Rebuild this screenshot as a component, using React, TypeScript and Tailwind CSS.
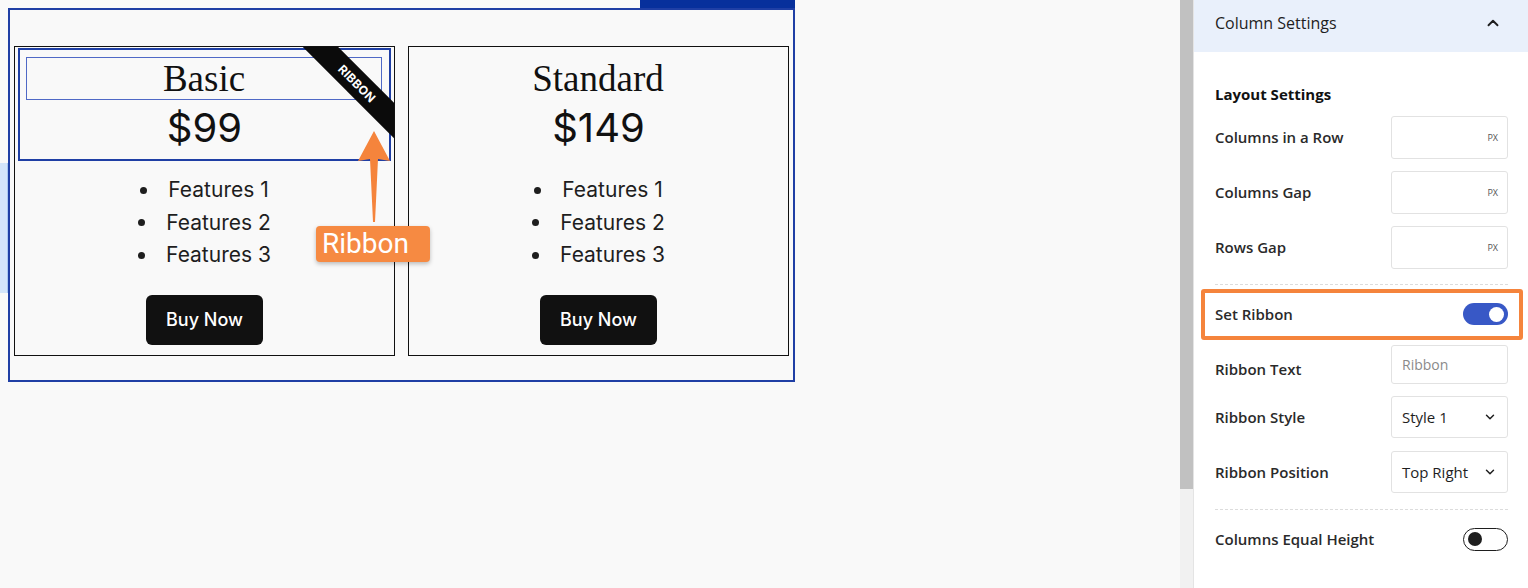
import { ChevronUp, ChevronDown } from "lucide-react";

const cardFont = { fontFamily: "Inter, 'Liberation Sans', sans-serif" };

function PriceCard({ title, price, selected, ribbon }: { title: string; price: string; selected?: boolean; ribbon?: boolean }) {
  return (
    <div className="relative flex h-[310px] w-[381px] flex-col overflow-hidden border border-[#111]" style={cardFont}>
      <div className={`mx-[3px] mt-[1px] h-[113px] border-2 ${selected ? "border-[#1f3fa5]" : "border-transparent"}`}>
        <div className={`ml-[6px] mr-[7px] mt-[7px] flex h-[43px] items-center justify-center border ${selected ? "border-[#4f69c6]" : "border-transparent"}`}>
          <span className="text-[37px] leading-none text-[#111]" style={{ fontFamily: "'Liberation Serif', serif" }}>{title}</span>
        </div>
        <div className="mt-[4px] text-center text-[40px] leading-[48px] text-[#111]">{price}</div>
      </div>

      <ul className="mt-[13px] flex flex-col items-center text-[21px] leading-[32.5px] text-[#1e1e1e]">
        {["Features 1", "Features 2", "Features 3"].map((f) => (
          <li key={f} className="flex items-center gap-[21px]">
            <span className="h-[7px] w-[7px] rounded-full bg-[#1e1e1e]" />
            {f}
          </li>
        ))}
      </ul>

      <div className="mt-[23px] flex justify-center">
        <button className="h-[50px] w-[117px] rounded-[6px] bg-[#111] text-[18px] font-medium text-white">Buy Now</button>
      </div>

      {ribbon && (
        <div className="absolute left-[272px] top-[24px] flex h-[25px] w-[140px] rotate-45 items-center justify-center bg-[#0b0b0b]">
          <span className="text-[12px] font-bold tracking-[0.02em] text-white">RIBBON</span>
        </div>
      )}
    </div>
  );
}

function UnitInput() {
  return (
    <div className="flex h-[43px] w-[117px] items-center justify-end rounded-[3px] border border-[#e2e2e2] bg-white pr-[9px]">
      <span className="text-[9px] text-[#555]">PX</span>
    </div>
  );
}

function SelectBox({ value }: { value: string }) {
  return (
    <div className="flex h-[42px] w-[117px] items-center justify-between rounded-[3px] border border-[#e2e2e2] bg-white pl-[10px] pr-[10px]">
      <span className="text-[15px] text-[#1e1e1e]">{value}</span>
      <ChevronDown className="h-[14px] w-[14px] text-[#1e1e1e]" strokeWidth={2.5} />
    </div>
  );
}

function Label({ children }: { children: React.ReactNode }) {
  return <span className="text-[15px] font-semibold text-[#2a2a2a]">{children}</span>;
}

export default function App() {
  return (
    <div className="flex h-[588px] w-[1528px] overflow-hidden bg-[#f9f9f9]">
      {/* Canvas */}
      <main className="relative w-[1180px] pl-2 pt-2">
        <div className="absolute left-0 top-[163px] h-[130px] w-[8px] border-r border-[#a9c9f2] bg-[#d3e5fb]" />
        <div className="absolute left-[640px] top-0 h-[8px] w-[155px] bg-[#07309c]" />

        <div className="flex h-[374px] w-[787px] gap-[13px] border-2 border-[#1f3fa5] px-[4px] pt-[36px]">
          <PriceCard title="Basic" price="$99" selected ribbon />
          <PriceCard title="Standard" price="$149" />
        </div>

        {/* Annotation */}
        <svg className="absolute left-[358px] top-[131px]" width="32" height="92" viewBox="0 0 32 92">
          <polygon points="16,0 32,30 20,28 17,91 15,91 12,28 0,30" fill="#f5843c" />
        </svg>
        <div
          className="absolute left-[316px] top-[226px] flex h-[36px] w-[114px] items-center rounded-[4px] bg-[#f68a42] pl-[6px] text-[28px] text-white shadow-[0_2px_4px_rgba(0,0,0,0.25)]"
          style={{ fontFamily: "Roboto, 'Open Sans', sans-serif" }}
        >
          Ribbon
        </div>
      </main>

      {/* Scrollbar */}
      <div className="flex w-[13px] flex-col bg-[#f1f1f1]">
        <div className="h-[489px] bg-[#c1c1c1]" />
      </div>

      {/* Sidebar */}
      <aside className="w-[335px] border-l border-[#e4e4e4] bg-white" style={{ fontFamily: "'Open Sans', 'Noto Sans', sans-serif" }}>
        <div className="flex h-[52px] items-center justify-between bg-[#e9f0fb] pb-[6px] pl-[21px] pr-[26px]">
          <span className="text-[16px] text-[#1e1e1e]">Column Settings</span>
          <ChevronUp className="h-[18px] w-[18px] text-[#1e1e1e]" strokeWidth={2.5} />
        </div>

        <div className="pl-[21px] pr-[20px]">
          <div className="mt-[32px] h-5 text-[15px] font-bold leading-5 text-[#111]">Layout Settings</div>

          <div className="mt-[12px] flex h-[43px] items-center justify-between">
            <Label>Columns in a Row</Label>
            <UnitInput />
          </div>
          <div className="mt-[12px] flex h-[43px] items-center justify-between">
            <Label>Columns Gap</Label>
            <UnitInput />
          </div>
          <div className="mt-[12px] flex h-[43px] items-center justify-between">
            <Label>Rows Gap</Label>
            <UnitInput />
          </div>

          <div className="mt-[15px] border-t border-dashed border-[#dcdcdc]" />

          <div className="relative mt-[9px] flex h-[40px] items-center justify-between">
            <Label>Set Ribbon</Label>
            <div className="flex h-[22px] w-[45px] items-center justify-end rounded-full bg-[#3858c6] pr-[4px]">
              <span className="h-[15px] w-[15px] rounded-full bg-white" />
            </div>
            <div className="absolute -bottom-[6px] -left-[14px] -right-[15px] -top-[5px] rounded-[3px] border-4 border-[#f5843c]" />
          </div>

          <div className="mt-[11px] flex h-[39px] items-center justify-between">
            <span className="pt-[8px]"><Label>Ribbon Text</Label></span>
            <div className="flex h-[39px] w-[117px] items-center rounded-[3px] border border-[#e2e2e2] bg-white pl-[10px]">
              <span className="text-[14px] text-[#8a8a8a]">Ribbon</span>
            </div>
          </div>
          <div className="mt-[12px] flex h-[42px] items-center justify-between">
            <Label>Ribbon Style</Label>
            <SelectBox value="Style 1" />
          </div>
          <div className="mt-[13px] flex h-[42px] items-center justify-between">
            <Label>Ribbon Position</Label>
            <SelectBox value="Top Right" />
          </div>

          <div className="mt-[16px] border-t border-dashed border-[#dcdcdc]" />

          <div className="mt-[9px] flex h-[40px] items-center justify-between">
            <Label>Columns Equal Height</Label>
            <div className="flex h-[23px] w-[45px] items-center rounded-full border-[1.5px] border-[#1e1e1e] bg-white pl-[4px]">
              <span className="h-[14px] w-[14px] rounded-full bg-[#1e1e1e]" />
            </div>
          </div>
        </div>
      </aside>
    </div>
  );
}
